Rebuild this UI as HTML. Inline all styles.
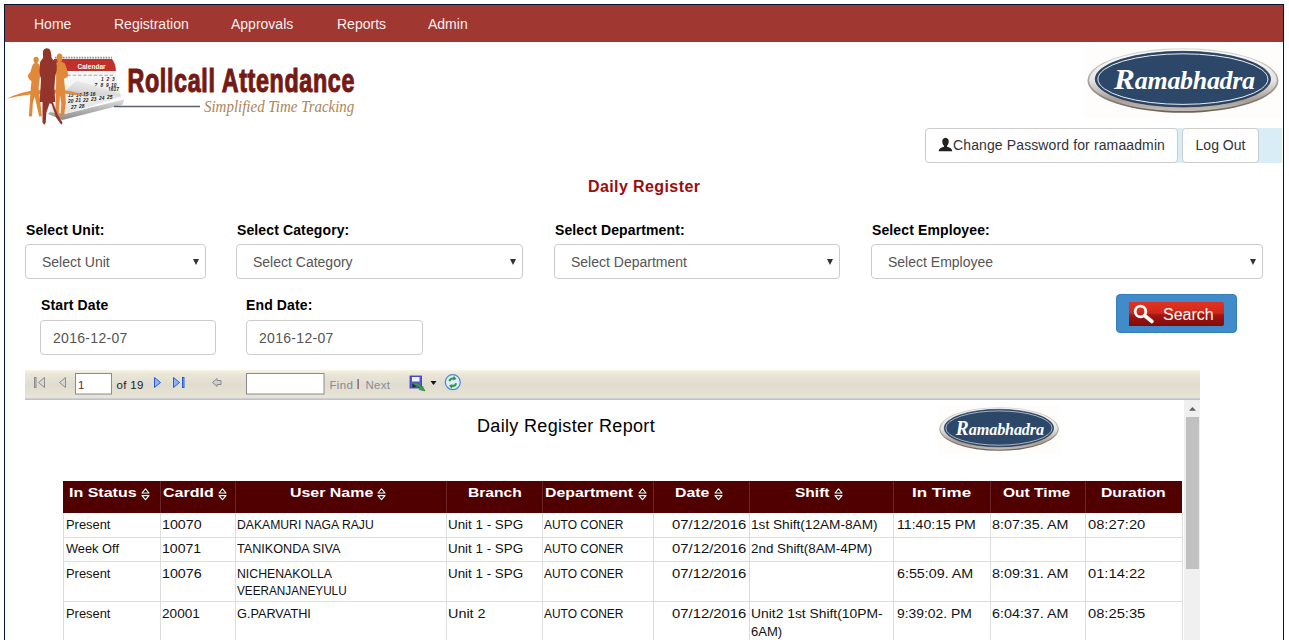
<!DOCTYPE html>
<html><head><meta charset="utf-8">
<style>
*{box-sizing:border-box;margin:0;padding:0}
html,body{width:1289px;height:640px;overflow:hidden;background:#fff;font-family:"Liberation Sans",sans-serif;color:#333}
.abs{position:absolute}
#frame{position:absolute;left:4px;top:4px;width:1280px;height:700px;border:1px solid #041537}
#nav{left:5px;top:5px;width:1278px;height:37px;background:#a03730}
#nav span{position:absolute;top:11px;font-size:14px;color:#f4f0f0;line-height:16px}
.btn{position:absolute;background:#fff;border:1px solid #ccc;border-radius:4px;font-size:14px;color:#333;line-height:32px;text-align:center}
.lbl{position:absolute;font-size:14px;font-weight:bold;color:#000;line-height:16px;letter-spacing:0.12px}
.sel{position:absolute;height:35px;border:1px solid #ccc;border-radius:4px;background:#fff;font-size:14px;color:#555;line-height:34px;padding-left:16px}
.sel i{position:absolute;right:6px;top:13.5px;width:0;height:0;border-left:3px solid transparent;border-right:3px solid transparent;border-top:6px solid #333}
.inp{position:absolute;height:35px;border:1px solid #ccc;border-radius:4px;background:#fff;font-size:14px;color:#555;line-height:34px;padding-left:12px;letter-spacing:0.3px}
.tt{position:absolute;top:485px;display:inline-block;font-size:13px;font-weight:bold;color:#fff;line-height:16px;white-space:nowrap;transform-origin:0 0}
.si{position:absolute;top:487px}
.bt{position:absolute;display:inline-block;font-size:12px;color:#111;line-height:16px;white-space:nowrap;transform-origin:0 0}
</style></head><body>
<div id="frame"></div>
<div id="nav" class="abs">
  <span style="left:29px">Home</span>
  <span style="left:109px">Registration</span>
  <span style="left:226px">Approvals</span>
  <span style="left:332px">Reports</span>
  <span style="left:423px">Admin</span>
</div>

<!-- logo placeholder -->
<svg class="abs" style="left:0;top:42px" width="360" height="90" viewBox="0 42 360 90">
<defs>
<linearGradient id="pg" x1="0" y1="0" x2="0.3" y2="1"><stop offset="0" stop-color="#ffffff"/><stop offset="1" stop-color="#e4e4e4"/></linearGradient>
<linearGradient id="curl" x1="0" y1="1" x2="0.6" y2="0"><stop offset="0" stop-color="#8e8e8e"/><stop offset="0.35" stop-color="#d6d6d6"/><stop offset="1" stop-color="#f4f4f4"/></linearGradient>
<linearGradient id="base" x1="0" y1="0" x2="0" y2="1"><stop offset="0" stop-color="#e0e0e0"/><stop offset="0.5" stop-color="#b4b4b4"/><stop offset="1" stop-color="#8a8a8a"/></linearGradient>
</defs>
<!-- calendar base slab -->
<polygon points="50,112 65.8,113.8 124.5,99.2 122.5,104.8 62.3,120.1 48,114" fill="url(#base)"/>
<!-- page -->
<polygon points="55,71 115,71 121,97 65.8,113.8 50,112" fill="url(#pg)"/>
<!-- red header -->
<path d="M54,59 L112,59 Q115.5,63 116,71 L54,71 Z" fill="#c0312c"/>
<path d="M55,57.6 L112,57.6" stroke="#6e5a5a" stroke-width="1.8" stroke-dasharray="0.7 0.9"/>
<text x="77.5" y="69.3" font-family="Liberation Sans" font-size="6.4" font-weight="bold" fill="#fff" letter-spacing="0.1">Calendar</text>
<!-- day names -->
<path d="M62,75.2 L114,75.2" stroke="#9a9a9a" stroke-width="0.9" stroke-dasharray="3.5 1.8"/>
<g font-family="Liberation Sans" font-size="4.8" font-weight="bold" fill="#161616" font-style="italic">
<text x="101" y="81">1</text><text x="106.5" y="81">2</text><text x="112" y="81">3</text>
<text x="94.5" y="87">7</text><text x="100.5" y="86.5">8</text><text x="106" y="86.5">9</text><text x="111" y="86.5">10</text>
<text x="108" y="91">16</text><text x="113.5" y="90.5">17</text>
</g>
<!-- curled page -->
<polygon points="66,90 77,80.5 120,93.5 121,96.5 70,94.5" fill="url(#curl)"/>
<g font-family="Liberation Sans" font-size="4.8" font-weight="bold" fill="#161616" font-style="italic">
<text x="68" y="97">13</text><text x="76" y="96.5">14</text><text x="83" y="96">15</text><text x="90" y="95.5">16</text>
<text x="68" y="102.5">20</text><text x="75.5" y="102">21</text><text x="83" y="101.5">22</text><text x="91" y="100.5">23</text><text x="99" y="99.5">24</text><text x="107" y="98.5">25</text>
<text x="71" y="108.5">27</text><text x="79" y="107.5">28</text>
</g>
<!-- swoosh -->
<path d="M6.5,98.8 Q18,93 30,91 Q45,89.5 60,89.8 Q72,90.5 89,97.2 Q74,94.5 62,93.6 Q45,93.5 30,94.5 Q18,96 6.5,98.8 Z" fill="#e18b3b"/>
<!-- left orange figure -->
<path d="M36,56.7 Q38.8,56.9 38.8,59.4 Q38.6,61.8 37.3,63.1 L39.2,64.4 Q40.3,70 39.9,77.4 L38.6,87.7 L40.5,103.3 L41.8,116.2 L39.2,116.5 L34.7,96.8 L32.8,103.3 L32.1,116.2 L28.9,116.5 L30.2,96.8 L30.8,87.7 L31.5,81.3 Q28.5,79.5 27.6,76.1 Q29,73 30.2,72.2 L32.8,64.4 L34.7,63.1 Q33.2,61.5 33.4,59.2 Q33.6,56.6 36,56.7 Z" fill="#e0893a"/>
<!-- right orange figure -->
<path d="M59.3,53.4 Q62.7,53.6 62.6,57.3 Q62.4,60.3 61.3,61.8 L64.5,63.1 Q67,68 68.4,76.1 Q66.5,78.5 63.9,78.7 L65.2,90.3 L65.8,103.3 L63.9,116.4 L60.6,116.4 L61.3,103.3 L60,95 L58.5,115.5 L55.5,115.5 L56.1,83.9 L56.1,63.1 Q57.8,62 57.8,61.5 Q56.4,59.5 56.7,56.7 Q57.2,53.3 59.3,53.4 Z" fill="#e0893a"/>
<!-- center figure -->
<path d="M46.4,48.2 Q49.8,48.4 50.3,50.2 Q51.5,54 51.6,58 Q53,60.5 55.8,61.2 Q57.2,65 56.6,70.9 Q55.3,75 55,78.7 L54.4,87.7 Q54.8,95 55.2,102 L52.8,102 L58,115 L62.6,122.7 L61.3,124.7 L56.1,117.5 L51.6,104 L49.6,103.3 L46.4,112.4 L45.7,122.7 L44.4,124.7 L42.5,122.7 L42.5,102 L39.8,102 Q40,95 40.5,87.7 L41,78.7 Q39.5,75 39.4,70.9 Q39.5,64 40.5,61.2 Q42.8,59.5 43.1,57.3 Q42.6,53 43.1,50.8 Q44,48.2 46.4,48.2 Z" fill="#93352b"/>
<!-- line -->
<path d="M114,106.5 L200,106.5" stroke="#5b6070" stroke-width="1.6"/>
<text id="rc" transform="translate(127.5 0) scale(0.717 1) translate(-127.5 0)" x="127.5" y="91.6" font-family="Liberation Sans" font-size="32.5" font-weight="bold" fill="#741a15" stroke="#741a15" stroke-width="1.1" letter-spacing="0.9">Rollcall Attendance</text>
<text id="st" transform="translate(204 0) scale(0.88 1) translate(-204 0)" x="204" y="112" font-family="Liberation Serif" font-size="17" font-style="italic" fill="#ad8556">Simplified Time Tracking</text>
</svg>

<!-- Ramabhadra -->
<div class="abs" style="left:1083px;top:46px;width:198px;height:72px;background:#fefdfc"></div>
<svg class="abs" style="left:1087px;top:48px" width="192" height="65" viewBox="0 0 192 65" preserveAspectRatio="none">
<defs>
<linearGradient id="sva" x1="0" y1="0" x2="0" y2="1"><stop offset="0" stop-color="#d8d8d8"/><stop offset="0.5" stop-color="#aaa5a0"/><stop offset="1" stop-color="#6a6058"/></linearGradient><linearGradient id="swa" x1="0" y1="0" x2="0" y2="1"><stop offset="0" stop-color="#fbfbfb"/><stop offset="0.5" stop-color="#e8e6e4"/><stop offset="0.82" stop-color="#a89e96"/><stop offset="1" stop-color="#c4bcb6"/></linearGradient>
</defs>
<ellipse cx="96" cy="32.5" rx="95.5" ry="32.3" fill="url(#sva)"/><ellipse cx="96" cy="32.2" rx="93.8" ry="30.9" fill="url(#swa)"/>
<ellipse cx="95.9" cy="31.1" rx="87.6" ry="27.8" fill="#2c4767" stroke="#1e3350" stroke-width="0.8"/>
<ellipse cx="95.9" cy="31.1" rx="85" ry="25.3" fill="none" stroke="#e8edf2" stroke-width="1"/>
<text x="27" y="41.5" font-family="Liberation Serif" font-style="italic" font-weight="bold" fill="#fff" transform="translate(27 0) scale(1.04 1) translate(-27 0)"><tspan font-size="30">R</tspan><tspan font-size="25" letter-spacing="-0.3">amabhadra</tspan></text>
</svg>

<div class="abs" style="left:1172px;top:128px;width:110px;height:35px;background:#d9edf7"></div>
<div class="btn" style="left:925px;top:128px;width:253px;height:35px"><svg style="position:absolute;left:12px;top:8px" width="15" height="15" viewBox="0 0 15 15"><path d="M7.5,0.8 C10,0.8 11,3 10.7,5.2 C10.5,7 9.6,8.3 9,8.8 L9,9.7 C11.5,10.3 14,11.2 14.3,14.2 L0.7,14.2 C1,11.2 3.5,10.3 6,9.7 L6,8.8 C5.4,8.3 4.5,7 4.3,5.2 C4,3 5,0.8 7.5,0.8 Z" fill="#222"/></svg><span style="position:absolute;left:27px;top:0;letter-spacing:0.12px">Change Password for ramaadmin</span></div>
<div class="btn" style="left:1182px;top:128px;width:77px;height:35px">Log Out</div>

<div class="abs" style="left:588px;top:178px;font-size:16px;font-weight:bold;color:#9a0d0d;line-height:18px;letter-spacing:0.4px">Daily Register</div>

<div class="lbl" style="left:26px;top:222px">Select Unit:</div>
<div class="lbl" style="left:237px;top:222px">Select Category:</div>
<div class="lbl" style="left:555px;top:222px">Select Department:</div>
<div class="lbl" style="left:872px;top:222px">Select Employee:</div>

<div class="sel" style="left:25px;top:244px;width:181px">Select Unit<i></i></div>
<div class="sel" style="left:236px;top:244px;width:287px">Select Category<i></i></div>
<div class="sel" style="left:554px;top:244px;width:286px">Select Department<i></i></div>
<div class="sel" style="left:871px;top:244px;width:392px">Select Employee<i></i></div>

<div class="lbl" style="left:41px;top:297px">Start Date</div>
<div class="lbl" style="left:246px;top:297px">End Date:</div>
<div class="inp" style="left:40px;top:320px;width:176px">2016-12-07</div>
<div class="inp" style="left:246px;top:320px;width:177px">2016-12-07</div>

<div class="abs" style="left:1116px;top:294px;width:121px;height:39px;background:#428bca;border:1px solid #357ebd;border-radius:4px"></div>
<div class="abs" style="left:1129px;top:301.5px;width:95px;height:24.5px;background:linear-gradient(#e2321f 0%,#cf2a1c 45%,#a31511 55%,#7e0c0a 100%);border-radius:0 2px 2px 0"></div>
<svg class="abs" style="left:1129px;top:301px" width="95" height="26" viewBox="0 0 95 26">
<circle cx="11.5" cy="10.5" r="5.3" fill="none" stroke="#fff" stroke-width="2.8"/>
<path d="M15.5,14.5 L23,20.5" stroke="#fff" stroke-width="3.6" stroke-linecap="round"/>
</svg>
<div id="srch" class="abs" style="left:1163px;top:305.7px;font-size:16px;color:#fff;line-height:18px">Search</div>

<!-- toolbar -->
<div class="abs" style="left:25px;top:370px;width:1175px;height:30px;background:linear-gradient(#f7f4e6 0%,#e9e6d8 15%,#e0ddd0 50%,#e5e2d4 80%,#e9e6d7 91%,#cfd0d4 95%,#b8b8c4 100%)"></div>
<svg class="abs" style="left:25px;top:370px" width="440" height="30" viewBox="25 370 440 30">
<g fill="none" stroke="#8c8c8c" stroke-width="1">
<rect x="34.5" y="377.5" width="1.5" height="10" fill="#c8c8c8"/>
<path d="M44.5,377.5 L38.5,382.5 L44.5,387.5 Z" fill="#d8d8d8"/>
<path d="M65.5,377.5 L59.5,382.5 L65.5,387.5 Z" fill="#d8d8d8"/>
</g>
<g stroke="#2a5ad8" stroke-width="1" fill="#8fb4f0">
<path d="M154.5,377.5 L160.5,382.5 L154.5,387.5 Z"/>
<path d="M173.5,377.5 L179.5,382.5 L173.5,387.5 Z"/>
<rect x="182.5" y="377.5" width="1.5" height="10"/>
</g>
<path d="M212.5,382.5 L217,378.5 L217,380.5 L221,380.5 L221,384.5 L217,384.5 L217,386.5 Z" fill="#d0d0d0" stroke="#8a8a8a" stroke-width="1"/>
<rect x="75.5" y="373.5" width="36" height="20.5" fill="#fff" stroke="#8a8a8a" stroke-width="1"/>
<rect x="246.5" y="373.5" width="77.5" height="20.5" fill="#fff" stroke="#8a8a8a" stroke-width="1"/>
<text x="78" y="388.5" font-family="Liberation Sans" font-size="11.5" fill="#7a2a10">1</text>
<text id="of19" x="116.5" y="388.5" font-family="Liberation Sans" font-size="11.5" fill="#222" letter-spacing="0.3">of 19</text>
<text x="329.5" y="388.5" font-family="Liberation Sans" font-size="11.5" fill="#8a8a96" letter-spacing="0.3">Find</text>
<rect x="357.6" y="379" width="1" height="10" fill="#5a2a6a"/>
<text x="365.5" y="388.5" font-family="Liberation Sans" font-size="11.5" fill="#8a8a96" letter-spacing="0.3">Next</text>
<!-- save icon -->
<rect x="410" y="376" width="11.5" height="12" fill="#5458d0" stroke="#3a3aa8" stroke-width="0.8"/>
<rect x="412" y="377" width="7.5" height="4.5" fill="#f0f0ff"/>
<rect x="412.5" y="384" width="3" height="3" fill="#222"/>
<path d="M414,385 Q418,385 420,388 L419,389.5 L425,391 L422.5,386 L421.5,387 Q419,382.5 414,382.5 Z" fill="#3aa04a" stroke="#1e6e2a" stroke-width="0.5"/>
<path d="M430.5,381 L436.5,381 L433.5,385 Z" fill="#111"/>
<circle cx="452.8" cy="382.2" r="7.5" fill="#e0ecfb" stroke="#4a86d8" stroke-width="1.2"/>
<path d="M448.5,381 Q449,377.5 453,377.5 L454,376 L456.5,379 L453,380.5 L453.5,379.3 Q450.5,379.5 450.3,381.5 Z" fill="#2a9a3a"/>
<path d="M457,383.5 Q456.5,387 452.5,387 L451.5,388.5 L449,385.5 L452.5,384 L452,385.2 Q455,385 455.2,383 Z" fill="#2a9a3a"/>
</svg>

<!-- report -->
<div class="abs" style="left:25px;top:400px;width:1175px;height:240px;background:#fff"></div>
<div class="abs" style="left:1184px;top:400px;width:16px;height:240px;background:#f0f0f0"></div>
<div class="abs" style="left:1186px;top:417px;width:13px;height:152px;background:#c1c1c1"></div>
<svg class="abs" style="left:1184px;top:400px" width="17" height="16"><path d="M5,10.8 L8.5,7 L12,10.8 Z" fill="#606060"/></svg>

<div class="abs" style="left:937px;top:405px;width:124px;height:50px;background:#fefdfc"></div>
<svg class="abs" style="left:939px;top:407px" width="120" height="44" viewBox="0 0 192 65" preserveAspectRatio="none">
<defs>
<linearGradient id="svb" x1="0" y1="0" x2="0" y2="1"><stop offset="0" stop-color="#d8d8d8"/><stop offset="0.5" stop-color="#aaa5a0"/><stop offset="1" stop-color="#6a6058"/></linearGradient><linearGradient id="swb" x1="0" y1="0" x2="0" y2="1"><stop offset="0" stop-color="#fbfbfb"/><stop offset="0.5" stop-color="#e8e6e4"/><stop offset="0.82" stop-color="#a89e96"/><stop offset="1" stop-color="#c4bcb6"/></linearGradient>
</defs>
<ellipse cx="96" cy="32.5" rx="95.5" ry="32.3" fill="url(#svb)"/><ellipse cx="96" cy="32.2" rx="93.8" ry="30.9" fill="url(#swb)"/>
<ellipse cx="95.9" cy="31.1" rx="87.6" ry="27.8" fill="#2c4767" stroke="#1e3350" stroke-width="0.8"/>
<ellipse cx="95.9" cy="31.1" rx="85" ry="25.3" fill="none" stroke="#e8edf2" stroke-width="1"/>
<text x="27" y="41.5" font-family="Liberation Serif" font-style="italic" font-weight="bold" fill="#fff" transform="translate(27 0) scale(1.04 1) translate(-27 0)"><tspan font-size="30">R</tspan><tspan font-size="25" letter-spacing="-0.3">amabhadra</tspan></text>
</svg>
<div class="abs" style="left:477px;top:416px;font-size:18px;color:#000;line-height:20px;letter-spacing:0.33px">Daily Register Report</div>

<!--TBL-->
<div class="abs" style="left:63px;top:481px;width:1119px;height:32px;background:#510000"></div>
<div class="abs" style="left:160px;top:481px;width:1px;height:32px;background:#6a2626"></div>
<div class="abs" style="left:235px;top:481px;width:1px;height:32px;background:#6a2626"></div>
<div class="abs" style="left:446px;top:481px;width:1px;height:32px;background:#6a2626"></div>
<div class="abs" style="left:542px;top:481px;width:1px;height:32px;background:#6a2626"></div>
<div class="abs" style="left:653px;top:481px;width:1px;height:32px;background:#6a2626"></div>
<div class="abs" style="left:749px;top:481px;width:1px;height:32px;background:#6a2626"></div>
<div class="abs" style="left:893px;top:481px;width:1px;height:32px;background:#6a2626"></div>
<div class="abs" style="left:990px;top:481px;width:1px;height:32px;background:#6a2626"></div>
<div class="abs" style="left:1085px;top:481px;width:1px;height:32px;background:#6a2626"></div>
<div class="abs" style="left:63px;top:513px;width:1px;height:127px;background:#dddddd"></div>
<div class="abs" style="left:160px;top:513px;width:1px;height:127px;background:#dddddd"></div>
<div class="abs" style="left:235px;top:513px;width:1px;height:127px;background:#dddddd"></div>
<div class="abs" style="left:446px;top:513px;width:1px;height:127px;background:#dddddd"></div>
<div class="abs" style="left:542px;top:513px;width:1px;height:127px;background:#dddddd"></div>
<div class="abs" style="left:653px;top:513px;width:1px;height:127px;background:#dddddd"></div>
<div class="abs" style="left:749px;top:513px;width:1px;height:127px;background:#dddddd"></div>
<div class="abs" style="left:893px;top:513px;width:1px;height:127px;background:#dddddd"></div>
<div class="abs" style="left:990px;top:513px;width:1px;height:127px;background:#dddddd"></div>
<div class="abs" style="left:1085px;top:513px;width:1px;height:127px;background:#dddddd"></div>
<div class="abs" style="left:1182px;top:513px;width:1px;height:127px;background:#dddddd"></div>
<div class="abs" style="left:63px;top:537px;width:1120px;height:1px;background:#dddddd"></div>
<div class="abs" style="left:63px;top:561px;width:1120px;height:1px;background:#dddddd"></div>
<div class="abs" style="left:63px;top:601px;width:1120px;height:1px;background:#dddddd"></div>
<span class="tt" id="h0" style="left:69.2px;transform:scaleX(1.2315)">In Status</span>
<svg class="si" style="left:141.2px" width="9" height="14" viewBox="0 0 9 14"><path d="M1,6 L4.5,1.9 L8,6 Z M1,8.6 L4.5,12.7 L8,8.6 Z" fill="#000" stroke="#fff" stroke-width="1.15" stroke-linejoin="round"/></svg>
<span class="tt" id="h1" style="left:163px;transform:scaleX(1.2317)">CardId</span>
<svg class="si" style="left:218.4px" width="9" height="14" viewBox="0 0 9 14"><path d="M1,6 L4.5,1.9 L8,6 Z M1,8.6 L4.5,12.7 L8,8.6 Z" fill="#000" stroke="#fff" stroke-width="1.15" stroke-linejoin="round"/></svg>
<span class="tt" id="h2" style="left:289.9px;transform:scaleX(1.2254)">User Name</span>
<svg class="si" style="left:377.4px" width="9" height="14" viewBox="0 0 9 14"><path d="M1,6 L4.5,1.9 L8,6 Z M1,8.6 L4.5,12.7 L8,8.6 Z" fill="#000" stroke="#fff" stroke-width="1.15" stroke-linejoin="round"/></svg>
<span class="tt" id="h3" style="left:468px;transform:scaleX(1.2023)">Branch</span>
<span class="tt" id="h4" style="left:545.3px;transform:scaleX(1.2194)">Department</span>
<svg class="si" style="left:637.6px" width="9" height="14" viewBox="0 0 9 14"><path d="M1,6 L4.5,1.9 L8,6 Z M1,8.6 L4.5,12.7 L8,8.6 Z" fill="#000" stroke="#fff" stroke-width="1.15" stroke-linejoin="round"/></svg>
<span class="tt" id="h5" style="left:674.8px;transform:scaleX(1.2179)">Date</span>
<svg class="si" style="left:713.8px" width="9" height="14" viewBox="0 0 9 14"><path d="M1,6 L4.5,1.9 L8,6 Z M1,8.6 L4.5,12.7 L8,8.6 Z" fill="#000" stroke="#fff" stroke-width="1.15" stroke-linejoin="round"/></svg>
<span class="tt" id="h6" style="left:795.2px;transform:scaleX(1.1964)">Shift</span>
<svg class="si" style="left:833.9px" width="9" height="14" viewBox="0 0 9 14"><path d="M1,6 L4.5,1.9 L8,6 Z M1,8.6 L4.5,12.7 L8,8.6 Z" fill="#000" stroke="#fff" stroke-width="1.15" stroke-linejoin="round"/></svg>
<span class="tt" id="h7" style="left:912.4px;transform:scaleX(1.3045)">In Time</span>
<span class="tt" id="h8" style="left:1003px;transform:scaleX(1.1964)">Out Time</span>
<span class="tt" id="h9" style="left:1100.8px;transform:scaleX(1.2113)">Duration</span>
<span class="bt" id="b0_0_0" style="left:65.6px;top:516.5px;transform:scaleX(1.0732)">Present</span>
<span class="bt" id="b0_1_0" style="left:162.3px;top:516.5px;transform:scaleX(1.1875)">10070</span>
<span class="bt" id="b0_2_0" style="left:236.8px;top:516.5px;transform:scaleX(1.0149)">DAKAMURI NAGA RAJU</span>
<span class="bt" id="b0_3_0" style="left:448.3px;top:516.5px;transform:scaleX(1.1152)">Unit 1 - SPG</span>
<span class="bt" id="b0_4_0" style="left:544.3px;top:516.5px;transform:scaleX(0.9949)">AUTO CONER</span>
<span class="bt" id="b0_5_0" style="left:672px;top:516.5px;transform:scaleX(1.2373)">07/12/2016</span>
<span class="bt" id="b0_6_0" style="left:751.3px;top:516.5px;transform:scaleX(1.1364)">1st Shift(12AM-8AM)</span>
<span class="bt" id="b0_7_0" style="left:896.5px;top:516.5px;transform:scaleX(1.1742)">11:40:15 PM</span>
<span class="bt" id="b0_8_0" style="left:992px;top:516.5px;transform:scaleX(1.1937)">8:07:35. AM</span>
<span class="bt" id="b0_9_0" style="left:1088px;top:516.5px;transform:scaleX(1.2261)">08:27:20</span>
<span class="bt" id="b1_0_0" style="left:65.6px;top:541.0px;transform:scaleX(1.0680)">Week Off</span>
<span class="bt" id="b1_1_0" style="left:162.3px;top:541.0px;transform:scaleX(1.1750)">10071</span>
<span class="bt" id="b1_2_0" style="left:236.8px;top:541.0px;transform:scaleX(1.0525)">TANIKONDA SIVA</span>
<span class="bt" id="b1_3_0" style="left:448.3px;top:541.0px;transform:scaleX(1.1152)">Unit 1 - SPG</span>
<span class="bt" id="b1_4_0" style="left:544.3px;top:541.0px;transform:scaleX(0.9949)">AUTO CONER</span>
<span class="bt" id="b1_5_0" style="left:672px;top:541.0px;transform:scaleX(1.2373)">07/12/2016</span>
<span class="bt" id="b1_6_0" style="left:751.3px;top:541.0px;transform:scaleX(1.1148)">2nd Shift(8AM-4PM)</span>
<span class="bt" id="b2_0_0" style="left:65.6px;top:565.6px;transform:scaleX(1.0732)">Present</span>
<span class="bt" id="b2_1_0" style="left:162.3px;top:565.6px;transform:scaleX(1.1875)">10076</span>
<span class="bt" id="b2_2_0" style="left:236.8px;top:565.6px;transform:scaleX(1.0239)">NICHENAKOLLA</span>
<span class="bt" id="b2_2_1" style="left:236.8px;top:583.1px;transform:scaleX(0.9786)">VEERANJANEYULU</span>
<span class="bt" id="b2_3_0" style="left:448.3px;top:565.6px;transform:scaleX(1.1152)">Unit 1 - SPG</span>
<span class="bt" id="b2_4_0" style="left:544.3px;top:565.6px;transform:scaleX(0.9949)">AUTO CONER</span>
<span class="bt" id="b2_5_0" style="left:672px;top:565.6px;transform:scaleX(1.2373)">07/12/2016</span>
<span class="bt" id="b2_7_0" style="left:896.5px;top:565.6px;transform:scaleX(1.1905)">6:55:09. AM</span>
<span class="bt" id="b2_8_0" style="left:992px;top:565.6px;transform:scaleX(1.1937)">8:09:31. AM</span>
<span class="bt" id="b2_9_0" style="left:1088px;top:565.6px;transform:scaleX(1.2261)">01:14:22</span>
<span class="bt" id="b3_0_0" style="left:65.6px;top:606.0px;transform:scaleX(1.0732)">Present</span>
<span class="bt" id="b3_1_0" style="left:162.3px;top:606.0px;transform:scaleX(1.1333)">20001</span>
<span class="bt" id="b3_2_0" style="left:236.8px;top:606.0px;transform:scaleX(1.0588)">G.PARVATHI</span>
<span class="bt" id="b3_3_0" style="left:448.3px;top:606.0px;transform:scaleX(1.2000)">Unit 2</span>
<span class="bt" id="b3_4_0" style="left:544.3px;top:606.0px;transform:scaleX(0.9949)">AUTO CONER</span>
<span class="bt" id="b3_5_0" style="left:672px;top:606.0px;transform:scaleX(1.2373)">07/12/2016</span>
<span class="bt" id="b3_6_0" style="left:751.3px;top:606.0px;transform:scaleX(1.1540)">Unit2 1st Shift(10PM-</span>
<span class="bt" id="b3_6_1" style="left:751.3px;top:623.5px;transform:scaleX(1.0857)">6AM)</span>
<span class="bt" id="b3_7_0" style="left:896.5px;top:606.0px;transform:scaleX(1.1562)">9:39:02. PM</span>
<span class="bt" id="b3_8_0" style="left:992px;top:606.0px;transform:scaleX(1.1937)">6:04:37. AM</span>
<span class="bt" id="b3_9_0" style="left:1088px;top:606.0px;transform:scaleX(1.2261)">08:25:35</span>
<!--/TBL-->
</body></html>
